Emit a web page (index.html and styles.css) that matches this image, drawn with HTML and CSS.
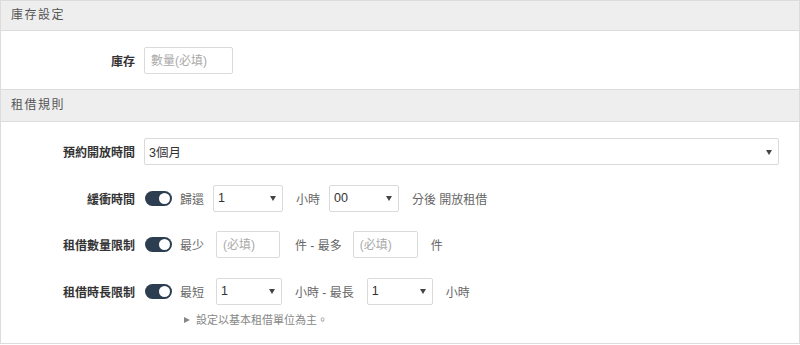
FILE: index.html
```html
<!DOCTYPE html>
<html lang="zh-Hant">
<head>
<meta charset="utf-8">
<title>庫存設定</title>
<link rel="stylesheet" href="styles.css">
</head>
<body>
<div class="panel">
  <div class="sec-head first">庫存設定</div>
  <div class="sec-body stock">
    <div class="row">
      <label class="lbl">庫存</label>
      <input class="txt qty" type="text" placeholder="數量(必填)">
    </div>
  </div>
  <div class="sec-head second">租借規則</div>
  <div class="sec-body rules">
    <div class="row wide">
      <label class="lbl">預約開放時間</label>
      <div class="sel full"><span>3個月</span></div>
    </div>
    <div class="row">
      <label class="lbl">緩衝時間</label>
      <span class="toggle"><span class="knob"></span></span>
      <span class="lead m9">歸還</span>
      <div class="sel w70"><span>1</span></div>
      <span class="unit m9">小時</span>
      <div class="sel w70"><span>00</span></div>
      <span class="unit">分後 開放租借</span>
    </div>
    <div class="row">
      <label class="lbl">租借數量限制</label>
      <span class="toggle"><span class="knob"></span></span>
      <span class="lead m12">最少</span>
      <input class="txt w64" type="text" placeholder="(必填)">
      <span class="unit ml15 m11">件 - 最多</span>
      <input class="txt w65" type="text" placeholder="(必填)">
      <span class="unit">件</span>
    </div>
    <div class="row">
      <label class="lbl">租借時長限制</label>
      <span class="toggle"><span class="knob"></span></span>
      <span class="lead m12">最短</span>
      <div class="sel w66"><span>1</span></div>
      <span class="unit m13">小時 - 最長</span>
      <div class="sel w66"><span>1</span></div>
      <span class="unit">小時</span>
    </div>
    <div class="note"><span class="tri"></span>設定以基本租借單位為主。</div>
  </div>
</div>
</body>
</html>
```
FILE: styles.css
```css
* { box-sizing: border-box; }
html, body { margin: 0; padding: 0; background: #fff; }
body {
  font-family: "Liberation Sans", "Noto Sans CJK TC", sans-serif;
  font-size: 12px;
  color: #555;
}
.panel {
  width: 800px;
  border: 1px solid #dcdcdc;
  background: #fff;
}
.sec-head {
  background: #eeeeee;
  color: #555;
  font-size: 12px;
  letter-spacing: 1.5px;
  padding-left: 10px;
  border-bottom: 1px solid #dcdcdc;
}
.sec-head.first { height: 30px; line-height: 29px; }
.sec-head.second { height: 33px; line-height: 31px; border-top: 1px solid #dcdcdc; }
.sec-body.stock { padding: 16px 0 15px; }
.sec-body.rules {
  padding: 16px 0 15px;
  display: flex;
  flex-direction: column;
  row-gap: 19.5px;
}
.row {
  display: flex;
  align-items: center;
  height: 27px;
}
.row.wide { padding-right: 20px; }
.lbl {
  width: 134px;
  margin-right: 9px;
  text-align: right;
  font-weight: bold;
  color: #333;
  flex: none;
}
.txt {
  height: 27px;
  border: 1px solid #dadada;
  border-radius: 2px;
  padding: 0 6px;
  font: inherit;
  font-size: 12px;
  color: #333;
  outline: none;
  background: #fff;
  flex: none;
}
.txt::placeholder { color: #aaa; }
.qty { width: 89px; }
.w64 { width: 64px; }
.w65 { width: 65px; }
.sel {
  position: relative;
  height: 27px;
  border: 1px solid #dadada;
  border-radius: 2px;
  padding-left: 4px;
  display: flex;
  align-items: center;
  color: #333;
  font-size: 12.5px;
  background: #fff;
  flex: none;
}
.sel::after {
  content: "";
  position: absolute;
  right: 6px;
  top: 50%;
  margin-top: -2px;
  border-left: 3.5px solid transparent;
  border-right: 3.5px solid transparent;
  border-top: 5px solid #444;
}
.sel.full { flex: 1; }
.w70 { width: 70px; }
.w66 { width: 66px; }
.toggle {
  position: relative;
  width: 27px;
  height: 15px;
  border-radius: 8px;
  background: #2c3e50;
  margin-left: 1px;
  margin-right: 8px;
  flex: none;
}
.knob {
  position: absolute;
  right: 2px;
  top: 2px;
  width: 11px;
  height: 11px;
  border-radius: 50%;
  background: #fff;
}
.lead { color: #666; flex: none; }
.unit { color: #666; margin-left: 13px; margin-right: 10px; flex: none; white-space: nowrap; }
.m9 { margin-right: 9px; }
.m11 { margin-right: 11px; }
.m12 { margin-right: 12px; }
.m13 { margin-right: 13px; }
.ml15 { margin-left: 15px; }
.note {
  margin-top: -12px;
  padding-left: 183px;
  height: 16px;
  line-height: 16px;
  font-size: 11px;
  color: #888;
  display: flex;
  align-items: center;
}
.tri {
  width: 0;
  height: 0;
  border-top: 3.5px solid transparent;
  border-bottom: 3.5px solid transparent;
  border-left: 6px solid #888;
  margin-right: 6px;
}
```
